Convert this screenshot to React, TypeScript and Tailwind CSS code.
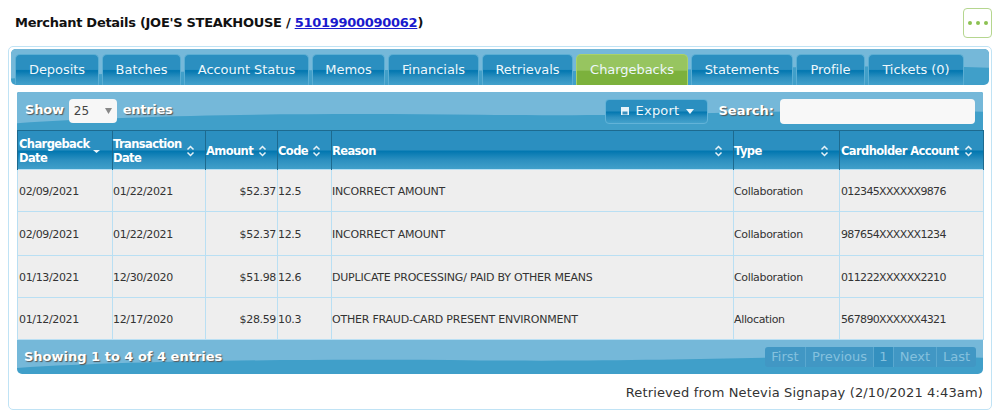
const font = "font-['DejaVu_Sans',Verdana,sans-serif]";

function Wave() {
  return (
    <svg className="absolute inset-0 w-full h-full" viewBox="0 0 1000 100" preserveAspectRatio="none" aria-hidden="true">
      <rect width="1000" height="100" fill="#409fc9" />
      <path d="M0 0H1000V52C840 38 700 66 480 60C300 55 130 60 0 82Z" fill="#75b8d9" />
    </svg>
  );
}

function Sort({ active }: { active?: boolean }) {
  if (active)
    return (
      <svg width="10" height="10" viewBox="0 0 10 10" className="shrink-0">
        <path d="M1 4h7L4.5 7Z" fill="#ecf5fa" />
      </svg>
    );
  return (
    <svg width="9" height="12" viewBox="0 0 9 12" className="shrink-0" fill="none" stroke="#e6f2f8" strokeWidth="1.5">
      <path d="M1.5 4.5 4.5 1.5 7.5 4.5" />
      <path d="M1.5 7.5 4.5 10.5 7.5 7.5" />
    </svg>
  );
}

const tabs = [
  ["Deposits", "w-[84px]"],
  ["Batches", "w-[79px]"],
  ["Account Status", "w-[125px]"],
  ["Memos", "w-[73px]"],
  ["Financials", "w-[91px]"],
  ["Retrievals", "w-[91px]"],
  ["Chargebacks", "w-[112px]"],
  ["Statements", "w-[102px]"],
  ["Profile", "w-[69px]"],
  ["Tickets (0)", "w-[96px]"],
];

const cols = [
  { label: "Chargeback Date", w: "w-[95px]", pl: "pl-[1px]", active: true },
  { label: "Transaction Date", w: "w-[93px]", pl: "pl-0" },
  { label: "Amount", w: "w-[72px]", pl: "pl-0" },
  { label: "Code", w: "w-[54px]", pl: "pl-0" },
  { label: "Reason", w: "w-[402px]", pl: "pl-0" },
  { label: "Type", w: "w-[106px]", pl: "pl-0" },
  { label: "Cardholder Account", w: "w-[144px]", pl: "pl-[1px]" },
];

const rows = [
  { h: "h-[42px]", c: ["02/09/2021", "01/22/2021", "$52.37", "12.5", "INCORRECT AMOUNT", "Collaboration", "012345XXXXXX9876"] },
  { h: "h-[44px]", c: ["02/09/2021", "01/22/2021", "$52.37", "12.5", "INCORRECT AMOUNT", "Collaboration", "987654XXXXXX1234"] },
  { h: "h-[42px]", c: ["01/13/2021", "12/30/2020", "$51.98", "12.6", "DUPLICATE PROCESSING/ PAID BY OTHER MEANS", "Collaboration", "011222XXXXXX2210"] },
  { h: "h-[42px]", c: ["01/12/2021", "12/17/2020", "$28.59", "10.3", "OTHER FRAUD-CARD PRESENT ENVIRONMENT", "Allocation", "567890XXXXXX4321"] },
];

const cellClass = [
  "pl-[1px] text-left tracking-[-0.35px]",
  "pl-0 text-left tracking-[-0.35px]",
  "pr-[1px] text-right tracking-[-0.35px]",
  "pl-0 text-left tracking-[-0.35px]",
  "pl-0 text-left tracking-[-0.22px]",
  "pl-0 text-left tracking-[-0.35px]",
  "pl-[1px] text-left tracking-[-0.65px]",
];

const tabGrad = "bg-[linear-gradient(#2b8fc0_0%,#2b8fc0_48%,#0277b0_52%,#2d90c0_75%,#43a1cb_100%)]";

export default function App() {
  return (
    <div className={`${font} w-[1000px] h-[416px] bg-white overflow-hidden px-2 pt-2 text-[#333]`}>
      <div className="flex items-start justify-between h-[38px]">
        <h1 className="pl-[7px] pt-[7px] text-[13px] leading-4 font-bold text-[#111] tracking-[-0.28px]">
          Merchant Details (JOE'S STEAKHOUSE /{" "}
          <a className="text-[#1a1acd] underline" href="#">51019900090062</a>)
        </h1>
        <button className="w-[29px] h-[30px] border border-[#b5d68f] rounded-[4px] flex items-center justify-center gap-[4px] bg-white">
          <span className="w-[4px] h-[4px] rounded-full bg-[#8cc152]" />
          <span className="w-[4px] h-[4px] rounded-full bg-[#8cc152]" />
          <span className="w-[4px] h-[4px] rounded-full bg-[#8cc152]" />
        </button>
      </div>

      <div className="w-[984px] h-[364px] border border-[#c0e3f5] rounded-[5px] p-[2px]">
        <div className="relative overflow-hidden h-[36px] w-[978px] rounded-[5px] flex items-end gap-[3px] pl-[4px]">
          <Wave />
          {tabs.map(([t, w]) => {
            const on = t === "Chargebacks";
            return (
              <div
                key={t}
                className={`relative ${w} h-[31px] rounded-t-[5px] flex items-center justify-center text-[13px] tracking-[-0.05px] text-[#eef7fb] border-t border-x ${
                  on
                    ? "border-[#a9d268] bg-[linear-gradient(#97c560_0%,#97c560_50%,#7cb13c_55%,#7cb13c_100%)]"
                    : `border-[#5baed3] ${tabGrad}`
                }`}
              >
                {t}
              </div>
            );
          })}
        </div>

        <div className="ml-[6px] mt-[7px] w-[966px]">
          <div className="relative overflow-hidden h-[38px] flex items-center pl-[8px] pr-[8px] text-white rounded-t-[2px]">
            <Wave />
            <span className="relative -mt-[2px] text-[13px] font-bold tracking-[-0.2px] [text-shadow:1px_1px_1px_#555]">Show</span>
            <span className="relative ml-[5px] w-[48px] h-[24px] rounded-[4px] bg-[#f7f7f7] text-[#444] text-[12px] flex items-center justify-between pl-[5px] pr-[5px]">
              25
              <svg width="7" height="6" viewBox="0 0 7 6"><path d="M0 0h7L3.5 6Z" fill="#888" /></svg>
            </span>
            <span className="relative -mt-[2px] ml-[6px] text-[13px] font-bold tracking-[-0.3px] [text-shadow:1px_1px_1px_#555]">entries</span>
            <span className={`relative ml-auto w-[103px] h-[25px] rounded-[4px] border border-[#62b3d8] flex items-center justify-center gap-[6px] text-[13px] text-[#eef7fb] tracking-[0.2px] ${tabGrad}`}>
              <svg width="10" height="10" viewBox="0 0 10 10">
                <path d="M1 1h8v8H1Z" fill="#e8f3f9" />
                <path d="M2.5 5.5h5v3h-5Z" fill="#3a8fbe" />
              </svg>
              Export
              <svg width="8" height="5" viewBox="0 0 8 5" className="ml-[1px]"><path d="M0 0h8L4 5Z" fill="#eef7fb" /></svg>
            </span>
            <span className="relative ml-[10px] text-[13px] font-bold tracking-[0px] [text-shadow:1px_1px_1px_#555]">Search:</span>
            <span className="relative ml-[6px] w-[195px] h-[25px] rounded-[4px] bg-[#f8f8f8]" />
          </div>

          <table className="table-fixed border-collapse w-[966px] text-[11px]">
            <thead>
              <tr className={`h-[39px] ${tabGrad}`}>
                {cols.map((c) => (
                  <th key={c.label} className={`${c.w} ${c.pl} border-x border-t border-[#1d6a8f] p-0 pr-[10px] pt-[1px] text-left text-white font-bold text-[11.5px] leading-[14px] tracking-[-0.6px]`}>
                    <div className="flex items-center justify-between">
                      <span>{c.label}</span>
                      <Sort active={c.active} />
                    </div>
                  </th>
                ))}
              </tr>
            </thead>
            <tbody>
              {rows.map((r, i) => (
                <tr key={i} className={`${r.h} bg-[#eeeeee]`}>
                  {r.c.map((v, j) => (
                    <td key={j} className={`border border-[#b9dff3] pt-[3px] pb-0 text-[#333] ${cellClass[j]}`}>
                      {v}
                    </td>
                  ))}
                </tr>
              ))}
            </tbody>
          </table>

          <div className="relative overflow-hidden h-[34px] flex items-center justify-between pl-[7px] pr-[7px] rounded-b-[5px] text-white">
            <Wave />
            <span className="relative text-[13px] font-bold tracking-[0px] [text-shadow:1px_1px_1px_#555]">Showing 1 to 4 of 4 entries</span>
            <div className="relative flex h-[20px] rounded-[3px] overflow-hidden bg-[#4197c4] text-[13px] tracking-[0px] text-[#85c1de]">
              <span className="w-[41px] flex items-center justify-center border-r border-[#5aa8cf]">First</span>
              <span className="w-[68px] flex items-center justify-center border-r border-[#5aa8cf]">Previous</span>
              <span className="w-[20px] flex items-center justify-center border-r border-[#5aa8cf] bg-[#3490bf]">1</span>
              <span className="w-[43px] flex items-center justify-center border-r border-[#5aa8cf]">Next</span>
              <span className="w-[39px] flex items-center justify-center">Last</span>
            </div>
          </div>

          <p className="mt-[11px] text-right text-[13px] leading-4 tracking-[0.14px] text-[#333]">Retrieved from Netevia Signapay (2/10/2021 4:43am)</p>
        </div>
      </div>
    </div>
  );
}
